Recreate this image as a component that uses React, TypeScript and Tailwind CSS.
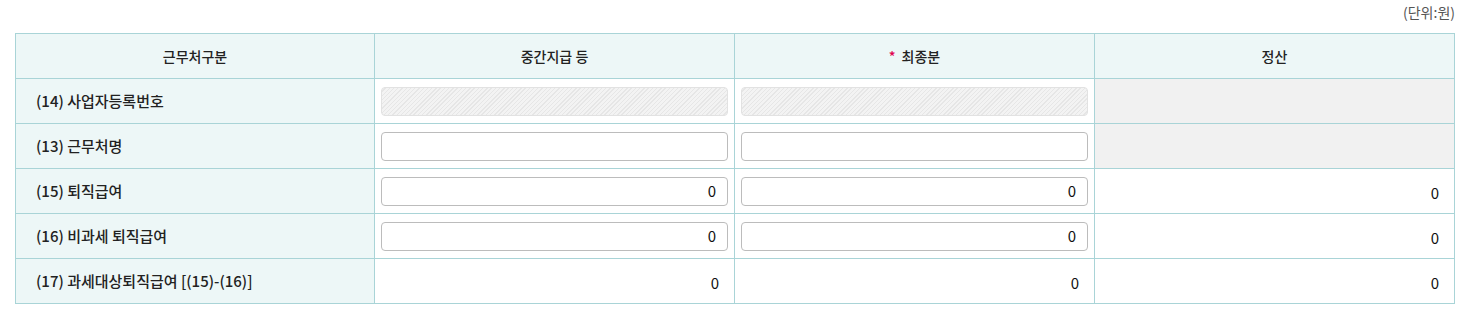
const font = { fontFamily: '"Noto Sans CJK KR", "Noto Sans", sans-serif' };

const cellBorder = "border border-[#a9d4d7]";

function Field({ value, disabled }: { value?: string; disabled?: boolean }) {
  if (disabled) {
    return (
      <div className="h-[29px] w-full rounded-[4px] border border-[#e2e2e2] bg-[repeating-linear-gradient(135deg,#f3f3f3_0px,#f3f3f3_2px,#e6e6e6_2px,#e6e6e6_3px)]" />
    );
  }
  return (
    <div className="flex h-[29px] w-full items-center justify-end rounded-[4px] border border-[#bcbcbc] bg-white pr-[11px] text-[15px] text-[#111]">
      {value}
    </div>
  );
}

type Cell = { kind: "input"; value?: string } | { kind: "disabled" } | { kind: "gray" } | { kind: "num"; value: string };

const rows: { label: string; cells: Cell[] }[] = [
  { label: "(14) 사업자등록번호", cells: [{ kind: "disabled" }, { kind: "disabled" }, { kind: "gray" }] },
  { label: "(13) 근무처명", cells: [{ kind: "input" }, { kind: "input" }, { kind: "gray" }] },
  { label: "(15) 퇴직급여", cells: [{ kind: "input", value: "0" }, { kind: "input", value: "0" }, { kind: "num", value: "0" }] },
  { label: "(16) 비과세 퇴직급여", cells: [{ kind: "input", value: "0" }, { kind: "input", value: "0" }, { kind: "num", value: "0" }] },
  { label: "(17) 과세대상퇴직급여 [(15)-(16)]", cells: [{ kind: "num", value: "0" }, { kind: "num", value: "0" }, { kind: "num", value: "0" }] },
];

export default function App() {
  return (
    <div className="min-h-[315px] bg-white pl-[15px] pt-[1px]" style={font}>
      <div className="w-[1440px]">
        <div className="flex h-[32px] items-start justify-end pt-[1px] text-[14px] text-[#555]">(단위:원)</div>
        <table className="w-[1439px] table-fixed border-collapse text-[14px] text-[#222]">
          <colgroup>
            <col className="w-[359px]" />
            <col className="w-[360px]" />
            <col className="w-[360px]" />
            <col className="w-[360px]" />
          </colgroup>
          <thead>
            <tr className="h-[45px] bg-[#edf7f7]">
              <th className={`${cellBorder} font-medium`}>근무처구분</th>
              <th className={`${cellBorder} font-medium`}>중간지급 등</th>
              <th className={`${cellBorder} font-medium`}>
                <span className="mr-[6px] text-[#e0004d]">*</span>최종분
              </th>
              <th className={`${cellBorder} font-medium`}>정산</th>
            </tr>
          </thead>
          <tbody>
            {rows.map((r) => (
              <tr key={r.label} className="h-[45px]">
                <td className={`${cellBorder} bg-[#edf7f7] pl-[20px] text-[15px] font-medium`}>{r.label}</td>
                {r.cells.map((c, i) => {
                  if (c.kind === "gray") return <td key={i} className={`${cellBorder} bg-[#f1f1f1]`} />;
                  if (c.kind === "num")
                    return (
                      <td key={i} className={`${cellBorder} pr-[15px] pt-[4px] text-right text-[15px] text-[#111]`}>
                        {c.value}
                      </td>
                    );
                  return (
                    <td key={i} className={`${cellBorder} px-[6px]`}>
                      {c.kind === "disabled" ? <Field disabled /> : <Field value={c.value} />}
                    </td>
                  );
                })}
              </tr>
            ))}
          </tbody>
        </table>
      </div>
    </div>
  );
}
